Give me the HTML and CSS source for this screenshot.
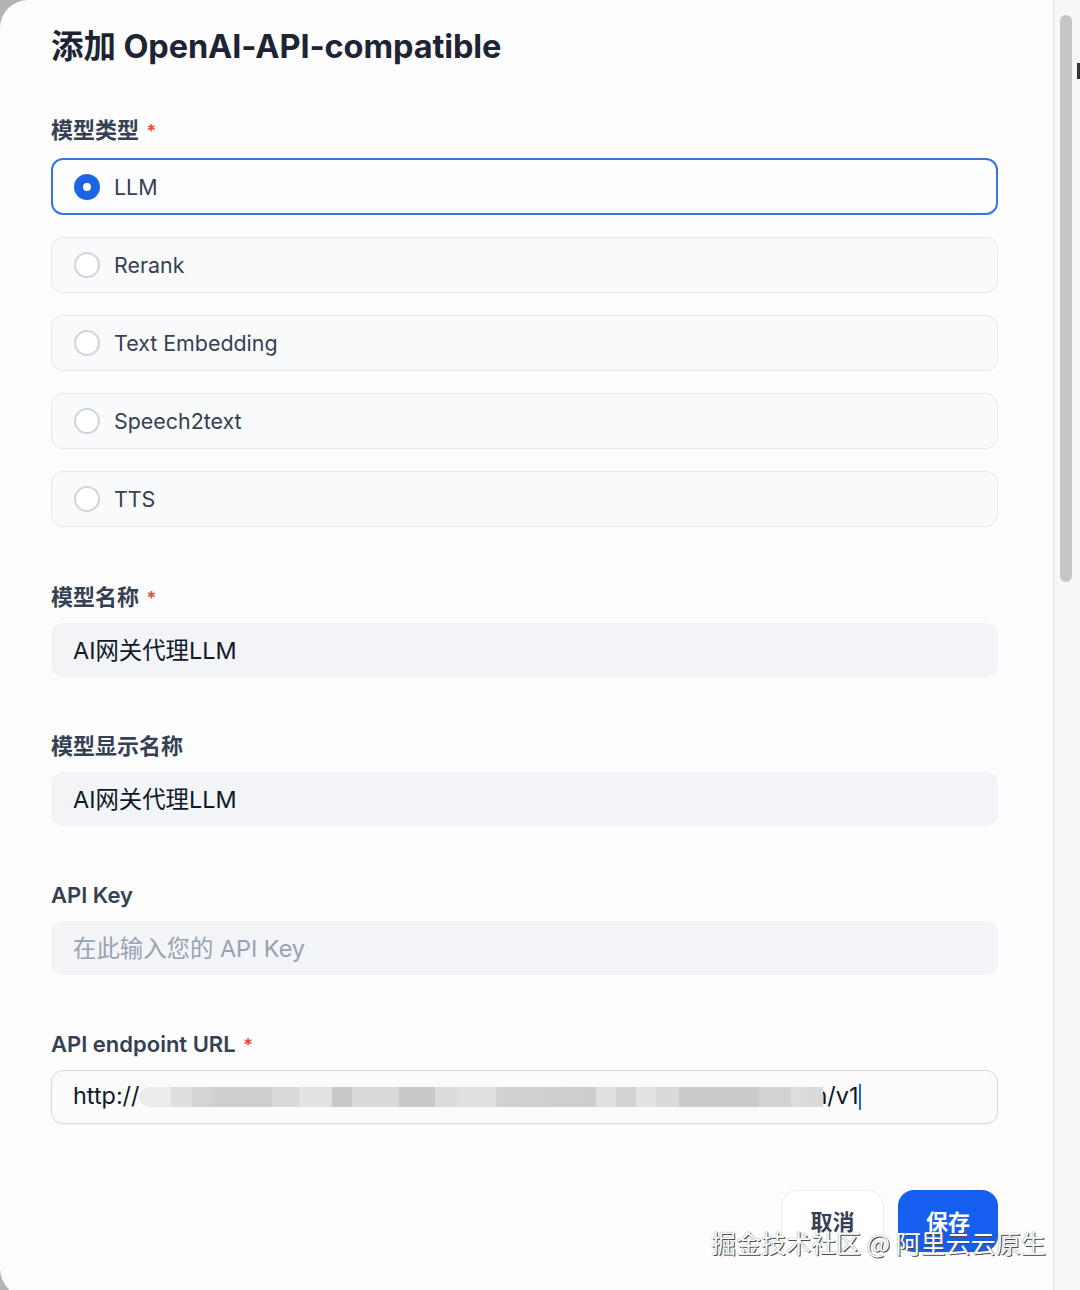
FILE: index.html
```html
<!DOCTYPE html>
<html lang="zh-CN">
<head>
    <meta charset="UTF-8">
    <meta name="viewport" content="width=device-width, initial-scale=1.0">
    <title>添加 OpenAI-API-compatible</title>
    <link rel="stylesheet" href="styles.css">
</head>
<body>
    <div class="page">
        <div class="dialog">
            <h1 class="title">添加 OpenAI-API-compatible</h1>

            <div class="label">模型类型 <span class="required">*</span></div>
            <div class="options">
                <div class="option selected">
                    <span class="radio"></span>
                    <span class="option-text">LLM</span>
                </div>
                <div class="option">
                    <span class="radio"></span>
                    <span class="option-text">Rerank</span>
                </div>
                <div class="option">
                    <span class="radio"></span>
                    <span class="option-text">Text Embedding</span>
                </div>
                <div class="option">
                    <span class="radio"></span>
                    <span class="option-text">Speech2text</span>
                </div>
                <div class="option">
                    <span class="radio"></span>
                    <span class="option-text">TTS</span>
                </div>
            </div>

            <div class="field">
                <div class="label">模型名称 <span class="required">*</span></div>
                <div class="input">AI网关代理LLM</div>
            </div>

            <div class="field">
                <div class="label">模型显示名称</div>
                <div class="input">AI网关代理LLM</div>
            </div>

            <div class="field">
                <div class="label">API Key</div>
                <div class="input placeholder">在此输入您的 API Key</div>
            </div>

            <div class="field">
                <div class="label">API endpoint URL <span class="required">*</span></div>
                <div class="input focused">
                    <span>http://</span><span class="blurred"></span><span class="url-end">n/v1</span><span class="caret"></span>
                </div>
            </div>

            <div class="footer">
                <button class="cancel-button">取消</button>
                <button class="save-button">保存</button>
            </div>

            <!-- watermark -->
            <div class="watermark">掘金技术社区 @ 阿里云云原生</div>
        </div>

        <div class="scrollbar">
            <div class="thumb"></div>
            <div class="sliver"></div>
        </div>
    </div>
</body>
</html>
```

FILE: styles.css
```css
/* page */
html, body {
    margin: 0;
    height: 1290px;
    overflow: hidden;
}

body {
    background-color: #b4b4b4;
    font-family: Inter, "Noto Sans CJK SC", sans-serif;
}

.page {
    display: flex;
    height: 1290px;
}

.dialog {
    position: relative;
    flex: 1;
    height: 1298px;
    box-sizing: border-box;
    padding: 27px 55px 0 51px;
    background-color: #fdfdfd;
    border-radius: 28px 0 0 30px;
}

.title {
    margin: 0;
    font-size: 32.5px;
    line-height: 40px;
    font-weight: 700;
    color: #1d2433;
    letter-spacing: -0.1px;
}

.label {
    height: 28px;
    line-height: 28px;
    font-size: 22px;
    font-weight: 600;
    color: #354052;
}

.required {
    color: #f04438;
    margin-left: 2px;
    font-size: 18px;
}

.title + .label {
    margin-top: 49px;
}

/* model type options */
.options {
    display: flex;
    flex-direction: column;
    gap: 22px;
    margin-top: 14px;
}

.option {
    display: flex;
    align-items: center;
    height: 56px;
    box-sizing: border-box;
    padding-left: 22px;
    background-color: #f9fafb;
    border: 1px solid #e6e8ec;
    border-radius: 12px;
}

.option.selected {
    height: 57px;
    padding-left: 21px;
    background-color: #fdfeff;
    border: 2px solid #3a74de;
}

.radio {
    width: 26px;
    height: 26px;
    box-sizing: border-box;
    border: 2px solid #d0d5dd;
    border-radius: 50%;
    background-color: #fff;
}

.option.selected .radio {
    border: 9px solid #1d63e6;
}

.option-text {
    margin-left: 14px;
    font-size: 21.4px;
    color: #354052;
}

/* text fields */
.field {
    margin-top: 55px;
}

.options + .field {
    margin-top: 56px;
}

.input {
    display: flex;
    align-items: center;
    height: 54px;
    margin-top: 12px;
    box-sizing: border-box;
    padding: 0 0 3px 22px;
    background-color: #f2f4f7;
    border-radius: 12px;
    font-size: 23.4px;
    color: #101828;
}

.input.placeholder {
    color: #98a2b3;
}

.input.focused {
    padding-left: 21px;
    background-color: #fbfbfc;
    border: 1px solid #d5d9e0;
    box-shadow: 0 1px 2px rgba(16, 24, 40, 0.05);
}

.blurred {
    position: relative;
    z-index: 1;
    width: 684px;
    height: 20px;
    margin-top: 3px;
    background: linear-gradient(to right,
        #ececec 0, #ececec 32px,
        #dedede 32px, #dedede 53px,
        #d4d4d4 53px, #d4d4d4 73px,
        #cfcfcf 73px, #cfcfcf 133px,
        #d9d9d9 133px, #d9d9d9 160px,
        #e2e2e2 160px, #e2e2e2 193px,
        #c9c9c9 193px, #c9c9c9 213px,
        #dadada 213px, #dadada 260px,
        #c9c9c9 260px, #c9c9c9 296px,
        #dcdcdc 296px, #dcdcdc 320px,
        #e0e0e0 320px, #e0e0e0 357px,
        #d2d2d2 357px, #cdcdcd 457px,
        #e0e0e0 457px, #e0e0e0 477px,
        #d3d3d3 477px, #d3d3d3 497px,
        #e2e2e2 497px, #e2e2e2 517px,
        #dadada 517px, #dadada 540px,
        #cbcbcb 540px, #cbcbcb 620px,
        #d3d3d3 620px, #d3d3d3 652px,
        #dedede 652px, #d8d8d8 684px);
    border-radius: 10px 0 0 10px;
}

.url-end {
    margin-left: -10px;
}

.caret {
    width: 2px;
    height: 26px;
    margin: 3px 0 0 1px;
    background-color: #2563eb;
}

/* footer */
.footer {
    display: flex;
    justify-content: flex-end;
    gap: 14px;
    margin-top: 66px;
}

.cancel-button, .save-button {
    height: 62px;
    border-radius: 16px;
    font-family: Inter, "Noto Sans CJK SC", sans-serif;
    font-size: 22px;
    font-weight: 700;
    padding: 0 0 2px;
    cursor: pointer;
}

.cancel-button {
    width: 103px;
    background-color: #fff;
    color: #354052;
    border: 1px solid #eaecf0;
}

.save-button {
    width: 100px;
    background-color: #155eef;
    color: #fff;
    border: none;
}

.watermark {
    position: absolute;
    left: 711px;
    top: 1224px;
    font-family: "Noto Sans CJK SC", sans-serif;
    font-size: 25px;
    line-height: 36px;
    color: #fff;
    text-shadow: 1px 1px 0 #4a4a4a, 0 0 1px #666;
    white-space: nowrap;
}

/* scrollbar on the right */
.scrollbar {
    display: flex;
    align-items: flex-start;
    width: 26px;
    background-color: #f7f7f7;
    border-left: 1px solid #e4e4e4;
}

.thumb {
    width: 12px;
    height: 567px;
    margin: 15px 0 0 6px;
    background-color: #c6c6c6;
    border-radius: 6px;
}

.sliver {
    width: 3px;
    height: 16px;
    margin: 63px 0 0 5px;
    background-color: #333;
}
```
